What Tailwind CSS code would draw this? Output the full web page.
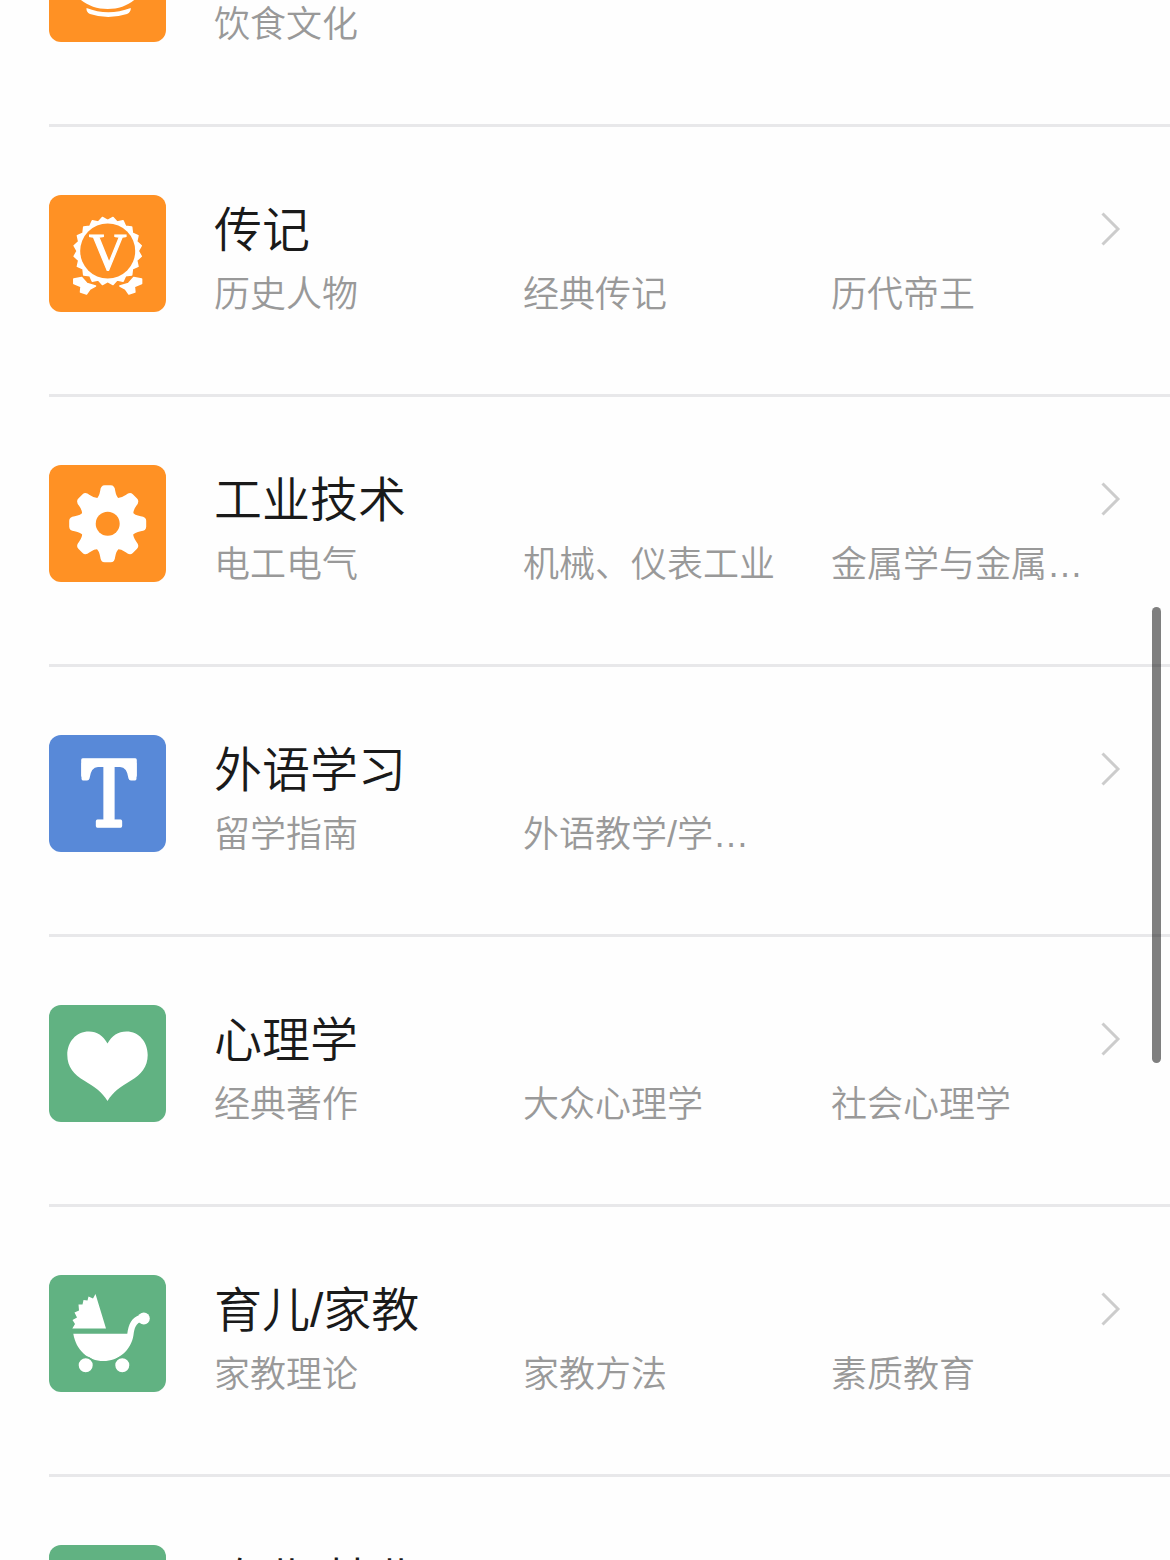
<!DOCTYPE html>
<html lang="zh-CN">
<head>
  <meta charset="UTF-8" />
  <meta name="viewport" content="width=device-width, initial-scale=1.0" />
  <title>图书分类</title>
  <script src="https://cdn.jsdelivr.net/npm/@tailwindcss/browser@4"></script>
</head>
<body class="bg-[#fefefe] overflow-hidden font-['Liberation_Sans','Noto_Sans_CJK_SC',sans-serif] font-[350]">
  <main class="relative h-[1560px] overflow-hidden">
    <ul class="-mt-[143px] pl-[49px]">

      <!-- 美食 -->
      <li class="flex h-[270px] pt-[68px] border-b-3 border-[#e8e8ea]">
        <svg class="size-[117px] shrink-0 rounded-[12px] bg-[#ff9124]" viewBox="0 0 117 117" fill="#fff">
          <path d="M20 50H97C97 70 80 84 58.700 84S20 70 20 50Z"/>
          <path d="M37.500 83Q59 91.500 81.800 83Q82 87 78 89Q59 95 41 89Q37 87 37.500 83Z"/>
        </svg>
        <div class="ml-[48px] flex-1">
          <h2 class="h-[71px] leading-[71px] text-[48px] text-[#1a1a1a]">美食</h2>
          <div class="grid grid-cols-[309px_308px_1fr] leading-[58px] text-[36px] text-[#999] whitespace-nowrap">
            <span>饮食文化</span>
          </div>
        </div>
      </li>

      <!-- 传记 -->
      <li class="flex h-[270px] pt-[68px] border-b-3 border-[#e8e8ea]">
        <svg class="size-[117px] shrink-0 rounded-[12px] bg-[#ff9124]" viewBox="0 0 117 117" fill="#fff">
          <g stroke="#fff" stroke-width="1.500" stroke-linejoin="round">
            <path id="ribbon" d="M24.800 84L32.700 82.500L38 88.500L46.500 91L41 94L37.500 99L31.500 97L32 91.500L24.800 88.500Z"/>
            <use href="#ribbon" transform="translate(117.400 0) scale(-1 1)"/>
          </g>
          <polygon id="seal" stroke="#fff" stroke-width="1.500" stroke-linejoin="round"/>
          <circle cx="58.700" cy="56" r="27.500" fill="#ff9124"/>
          <text x="58.700" y="74.500" text-anchor="middle" font-family="Liberation Serif, serif" font-size="52" stroke="#fff" stroke-width="1.200">V</text>
        </svg>
        <div class="ml-[48px] flex-1">
          <h2 class="h-[71px] leading-[71px] text-[48px] text-[#1a1a1a]">传记</h2>
          <div class="grid grid-cols-[309px_308px_1fr] leading-[58px] text-[36px] text-[#999] whitespace-nowrap">
            <span>历史人物</span>
            <span>经典传记</span>
            <span>历代帝王</span>
          </div>
        </div>
        <svg class="-ml-[72px] mr-[48px] mt-[16px] w-[24px] h-[36px]" viewBox="0 0 24 36" fill="none" stroke="#ccc" stroke-width="3">
          <path d="M4.500 2.500L20 18L4.500 33.500"/>
        </svg>
      </li>

      <!-- 工业技术 -->
      <li class="flex h-[270px] pt-[68px] border-b-3 border-[#e8e8ea]">
        <svg class="size-[117px] shrink-0 rounded-[12px] bg-[#ff9124]" viewBox="0 0 117 117" fill="#fff">
          <g transform="translate(58.700 58.700)">
            <g id="teeth">
              <path id="tooth" d="M-12 -24Q-8.500 -27 -7.500 -33Q-7 -38.500 -3 -38.500H3Q7 -38.500 7.500 -33Q8.500 -27 12 -24Z"/>
              <use href="#tooth" transform="rotate(45)"/>
              <use href="#tooth" transform="rotate(90)"/>
              <use href="#tooth" transform="rotate(135)"/>
            </g>
            <use href="#teeth" transform="rotate(180)"/>
            <circle r="26.500"/>
            <circle r="12" fill="#ff9124"/>
          </g>
        </svg>
        <div class="ml-[48px] flex-1">
          <h2 class="h-[71px] leading-[71px] text-[48px] text-[#1a1a1a]">工业技术</h2>
          <div class="grid grid-cols-[309px_308px_1fr] leading-[58px] text-[36px] text-[#999] whitespace-nowrap">
            <span>电工电气</span>
            <span>机械、仪表工业</span>
            <span>金属学与金属…</span>
          </div>
        </div>
        <svg class="-ml-[72px] mr-[48px] mt-[16px] w-[24px] h-[36px]" viewBox="0 0 24 36" fill="none" stroke="#ccc" stroke-width="3">
          <path d="M4.500 2.500L20 18L4.500 33.500"/>
        </svg>
      </li>

      <!-- 外语学习 -->
      <li class="flex h-[270px] pt-[68px] border-b-3 border-[#e8e8ea]">
        <svg class="size-[117px] shrink-0 rounded-[12px] bg-[#5889d8]" viewBox="0 0 117 117" fill="#fff">
          <text x="33" y="91" textLength="54" lengthAdjust="spacingAndGlyphs" font-family="DejaVu Serif, serif" font-size="89.500" stroke="#fff" stroke-width="3.500" stroke-linejoin="round">T</text>
          <!-- flared serifs -->
          <path id="serif" d="M32.500 28H49V32Q42 32 40.500 43.500Q40 45.500 38 45.500H34Q32.500 45.500 32.500 43.500Z"/>
          <use href="#serif" transform="translate(120 0) scale(-1 1)"/>
        </svg>
        <div class="ml-[48px] flex-1">
          <h2 class="h-[71px] leading-[71px] text-[48px] text-[#1a1a1a]">外语学习</h2>
          <div class="grid grid-cols-[309px_308px_1fr] leading-[58px] text-[36px] text-[#999] whitespace-nowrap">
            <span>留学指南</span>
            <span>外语教学/学…</span>
          </div>
        </div>
        <svg class="-ml-[72px] mr-[48px] mt-[16px] w-[24px] h-[36px]" viewBox="0 0 24 36" fill="none" stroke="#ccc" stroke-width="3">
          <path d="M4.500 2.500L20 18L4.500 33.500"/>
        </svg>
      </li>

      <!-- 心理学 -->
      <li class="flex h-[270px] pt-[68px] border-b-3 border-[#e8e8ea]">
        <svg class="size-[117px] shrink-0 rounded-[12px] bg-[#61b282]" viewBox="0 0 117 117" fill="#fff">
          <path d="M58.500 38.500C54 30.500 48 26.500 40 26.500C27 26.500 18.300 37 18.300 50C18.300 62 25 69.500 35 75.500C46 82 53 87 58.500 96C64 87 71 82 82 75.500C92 69.500 98.700 62 98.700 50C98.700 37 90 26.500 77.500 26.500C69 26.500 63 30.500 58.500 38.500Z"/>
        </svg>
        <div class="ml-[48px] flex-1">
          <h2 class="h-[71px] leading-[71px] text-[48px] text-[#1a1a1a]">心理学</h2>
          <div class="grid grid-cols-[309px_308px_1fr] leading-[58px] text-[36px] text-[#999] whitespace-nowrap">
            <span>经典著作</span>
            <span>大众心理学</span>
            <span>社会心理学</span>
          </div>
        </div>
        <svg class="-ml-[72px] mr-[48px] mt-[16px] w-[24px] h-[36px]" viewBox="0 0 24 36" fill="none" stroke="#ccc" stroke-width="3">
          <path d="M4.500 2.500L20 18L4.500 33.500"/>
        </svg>
      </li>

      <!-- 育儿/家教 -->
      <li class="flex h-[270px] pt-[68px] border-b-3 border-[#e8e8ea]">
        <svg class="size-[117px] shrink-0 rounded-[12px] bg-[#61b282]" viewBox="0 0 117 117" fill="#fff">
          <path d="M46.500 19L57 53.500H23.300L26 49L23.500 45L28 42.500L25.500 37.500L30 35.500L29.500 29.500L33.500 29.500L34.500 25L38.500 25.500L39.500 21.500L44 23.500Z"/>
          <path d="M24.300 58.700H78.300C79.500 49 83 42 91 40L94 46C86.500 48 85.500 53 84.500 60C82 76 69 86 54.500 86C39 86 27 75 24.300 58.700Z"/>
          <circle cx="94.800" cy="43.500" r="6"/>
          <g stroke="#61b282" stroke-width="2">
            <circle cx="36.700" cy="90.300" r="8"/>
            <circle cx="73.300" cy="90.300" r="8"/>
          </g>
        </svg>
        <div class="ml-[48px] flex-1">
          <h2 class="h-[71px] leading-[71px] text-[48px] text-[#1a1a1a]">育儿/家教</h2>
          <div class="grid grid-cols-[309px_308px_1fr] leading-[58px] text-[36px] text-[#999] whitespace-nowrap">
            <span>家教理论</span>
            <span>家教方法</span>
            <span>素质教育</span>
          </div>
        </div>
        <svg class="-ml-[72px] mr-[48px] mt-[16px] w-[24px] h-[36px]" viewBox="0 0 24 36" fill="none" stroke="#ccc" stroke-width="3">
          <path d="M4.500 2.500L20 18L4.500 33.500"/>
        </svg>
      </li>

      <!-- 农业/林业 -->
      <li class="flex h-[270px] pt-[68px]">
        <div class="size-[117px] shrink-0 rounded-[12px] bg-[#61b282]"></div>
        <div class="ml-[48px] flex-1">
          <h2 class="h-[71px] leading-[73px] text-[48px] text-[#1a1a1a]">农业/林业</h2>
        </div>
      </li>
    </ul>

    <!-- scroll indicator -->
    <div class="absolute right-[9px] top-[607px] w-[9px] h-[456px] rounded-full bg-black/50"></div>
  </main>

  <script>
    // toothed edge of the seal
    const points = [];
    const teeth = 20;
    for (let i = 0; i < teeth * 2; i++) {
      const r = i % 2 ? 30.5 : 34;
      const a = Math.PI * (i + 1) / teeth;
      points.push((58.7 + r * Math.sin(a)).toFixed(1) + ',' + (56 - r * Math.cos(a)).toFixed(1));
    }
    document.getElementById('seal').setAttribute('points', points.join(' '));
  </script>
</body>
</html>
